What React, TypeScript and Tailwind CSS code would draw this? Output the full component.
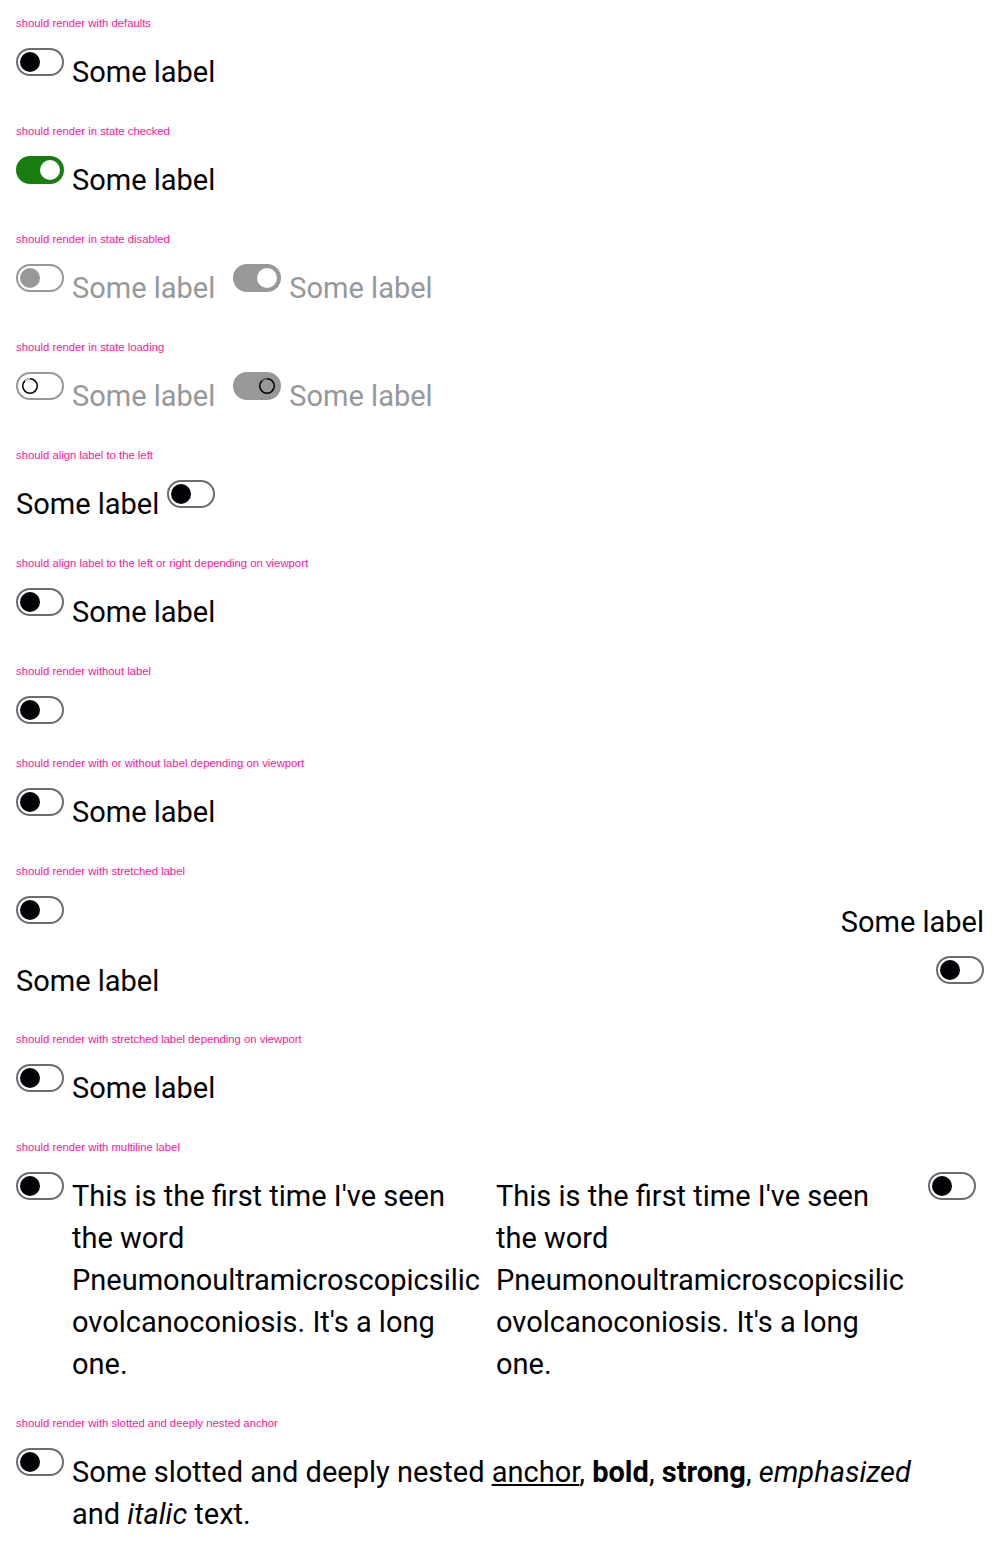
import type { ReactNode } from "react";

type ToggleProps = {
  checked?: boolean;
  disabled?: boolean;
  loading?: boolean;
};

// plain switch track + knob, 48x28 like the design system one
function Toggle({ checked = false, disabled = false, loading = false }: ToggleProps) {
  const muted = disabled || loading;
  let track = "bg-white border-[#6b6d70]";
  if (checked && muted) track = "bg-[#96989a] border-[#96989a]";
  else if (checked) track = "bg-[#197e10] border-[#197e10]";
  else if (muted) track = "bg-white border-[#96989a]";

  let knob = "bg-[#010205]";
  if (checked) knob = "bg-white";
  else if (disabled) knob = "bg-[#96989a]";

  return (
    <span
      className={`flex h-[28px] w-[48px] shrink-0 items-center rounded-full border-2 p-[2px] ${track} ${
        checked ? "justify-end" : "justify-start"
      }`}
    >
      {loading ? (
        <span className="flex h-5 w-5 items-center justify-center">
          <svg width="18" height="18" viewBox="0 0 18 18">
            <circle cx="9" cy="9" r="7.25" fill="none" stroke="#010205" strokeWidth="1.5" />
            <path d="M3.9 3.9 A7.25 7.25 0 0 1 9 1.75" fill="none" stroke={checked ? "#6b6d70" : "#d0d1d3"} strokeWidth="1.5" />
          </svg>
        </span>
      ) : (
        <span className={`h-5 w-5 rounded-full ${knob}`} />
      )}
    </span>
  );
}

const labelFont = "font-['Roboto','Liberation_Sans',sans-serif] text-[29px] leading-[42px]";

function Label({ children, muted = false, className = "" }: { children: ReactNode; muted?: boolean; className?: string }) {
  return (
    <span className={`${labelFont} ${muted ? "text-[#96989a]" : "text-[#010205]"} ${className}`}>{children}</span>
  );
}

// label sits a little lower than the toggle top, the row still keeps its 44px height
const rowLabel = "pt-[3px] -mb-[1px]";

function Switch({
  checked,
  disabled,
  loading,
  left = false,
  label = "Some label",
}: ToggleProps & { left?: boolean; label?: ReactNode }) {
  const muted = disabled || loading;
  return (
    <div className="flex items-start gap-2">
      {left && <Label muted={muted} className={rowLabel}>{label}</Label>}
      <Toggle checked={checked} disabled={disabled} loading={loading} />
      {!left && <Label muted={muted} className={rowLabel}>{label}</Label>}
    </div>
  );
}

function Section({ title, children }: { title: string; children: ReactNode }) {
  return (
    <section className="mb-[31px]">
      <p className="h-4 font-['Liberation_Sans',Arial,sans-serif] text-[11.3px] leading-4 text-[#ff1493]">{title}</p>
      <div className="mt-[17px]">{children}</div>
    </section>
  );
}

const longText = "This is the first time I've seen the word Pneumonoultramicroscopicsilicovolcanoconiosis. It's a long one.";

export default function App() {
  return (
    <div className="min-h-[1550px] bg-white px-4 pt-[15px]">
      <Section title="should render with defaults">
        <Switch />
      </Section>

      <Section title="should render in state checked">
        <Switch checked />
      </Section>

      <Section title="should render in state disabled">
        <div className="flex gap-[18px]">
          <Switch disabled />
          <Switch disabled checked />
        </div>
      </Section>

      <Section title="should render in state loading">
        <div className="flex gap-[18px]">
          <Switch loading />
          <Switch loading checked />
        </div>
      </Section>

      <Section title="should align label to the left">
        <Switch left />
      </Section>

      <Section title="should align label to the left or right depending on viewport">
        <Switch />
      </Section>

      <Section title="should render without label">
        <Toggle />
      </Section>

      <Section title="should render with or without label depending on viewport">
        <Switch />
      </Section>

      <Section title="should render with stretched label">
        <div className="-mb-[2px] flex justify-between">
          <div className="flex flex-col items-start">
            <Toggle />
            <Label className="mt-[36px]">Some label</Label>
          </div>
          <div className="flex flex-col items-end">
            <Label className="mt-[5px]">Some label</Label>
            <div className="mt-[13px]">
              <Toggle />
            </div>
          </div>
        </div>
      </Section>

      <Section title="should render with stretched label depending on viewport">
        <Switch />
      </Section>

      <Section title="should render with multiline label">
        <div className="flex">
          <div className="flex w-[480px] items-start gap-2">
            <Toggle />
            <Label className={`w-[416px] break-words ${rowLabel}`}>{longText}</Label>
          </div>
          <div className="flex w-[480px] items-start justify-between">
            <Label className={`w-[416px] break-words ${rowLabel}`}>{longText}</Label>
            <Toggle />
          </div>
        </div>
      </Section>

      <Section title="should render with slotted and deeply nested anchor">
        <div className="flex items-start gap-2">
          <Toggle />
          <Label className={`max-w-[880px] ${rowLabel}`}>
            Some slotted and deeply nested{" "}
            <a href="#" className="underline">
              anchor
            </a>
            , <b className="font-bold">bold</b>, <strong className="font-bold">strong</strong>, <em className="italic">emphasized</em> and{" "}
            <i className="italic">italic</i> text.
          </Label>
        </div>
      </Section>
    </div>
  );
}
